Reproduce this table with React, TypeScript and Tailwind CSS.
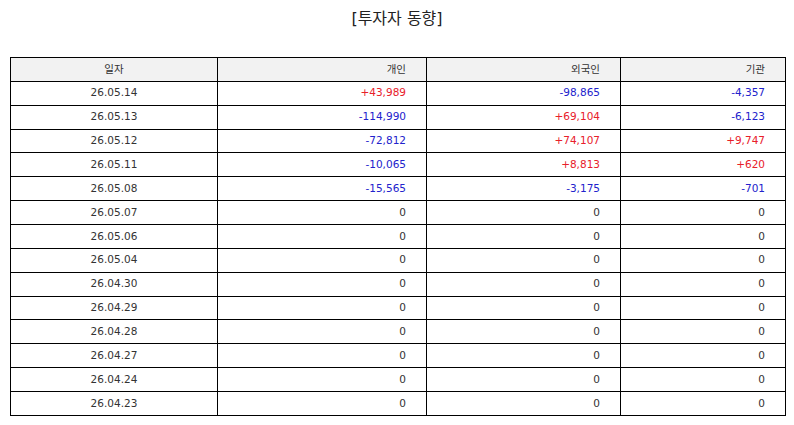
const rows: [string, number, number, number][] = [
  ["26.05.14", 43989, -98865, -4357],
  ["26.05.13", -114990, 69104, -6123],
  ["26.05.12", -72812, 74107, 9747],
  ["26.05.11", -10065, 8813, 620],
  ["26.05.08", -15565, -3175, -701],
  ["26.05.07", 0, 0, 0],
  ["26.05.06", 0, 0, 0],
  ["26.05.04", 0, 0, 0],
  ["26.04.30", 0, 0, 0],
  ["26.04.29", 0, 0, 0],
  ["26.04.28", 0, 0, 0],
  ["26.04.27", 0, 0, 0],
  ["26.04.24", 0, 0, 0],
  ["26.04.23", 0, 0, 0],
];

function fmt(v: number): string {
  if (v === 0) return "0";
  const s = Math.abs(v).toLocaleString("en-US");
  return v > 0 ? `+${s}` : `-${s}`;
}

function Num({ v }: { v: number }) {
  const color = v > 0 ? "text-[#e8202a]" : v < 0 ? "text-[#2222cc]" : "text-[#333333]";
  return <td className={`border border-black pr-[20px] text-right ${color}`}>{fmt(v)}</td>;
}

export default function App() {
  return (
    <div className="h-[425px] w-[794px] bg-white px-[10px] pt-[7px] font-['DejaVu_Sans','Noto_Sans_CJK_KR',sans-serif] text-[#333333]">
      <h1 className="text-center text-[16px] leading-[24px] text-[#222222]">[투자자 동향]</h1>
      <table className="mt-[26px] w-[775px] table-fixed border-collapse text-[10.5px]">
        <colgroup>
          <col className="w-[207px]" />
          <col className="w-[209px]" />
          <col className="w-[194px]" />
          <col className="w-[165px]" />
        </colgroup>
        <thead>
          <tr className="h-[23.87px] bg-[#f2f2f2]">
            <th className="border border-black text-center font-normal">일자</th>
            <th className="border border-black pr-[20px] text-right font-normal">개인</th>
            <th className="border border-black pr-[20px] text-right font-normal">외국인</th>
            <th className="border border-black pr-[20px] text-right font-normal">기관</th>
          </tr>
        </thead>
        <tbody>
          {rows.map(([date, a, b, c]) => (
            <tr key={date} className="h-[23.87px]">
              <td className="border border-black text-center">{date}</td>
              <Num v={a} />
              <Num v={b} />
              <Num v={c} />
            </tr>
          ))}
        </tbody>
      </table>
    </div>
  );
}
